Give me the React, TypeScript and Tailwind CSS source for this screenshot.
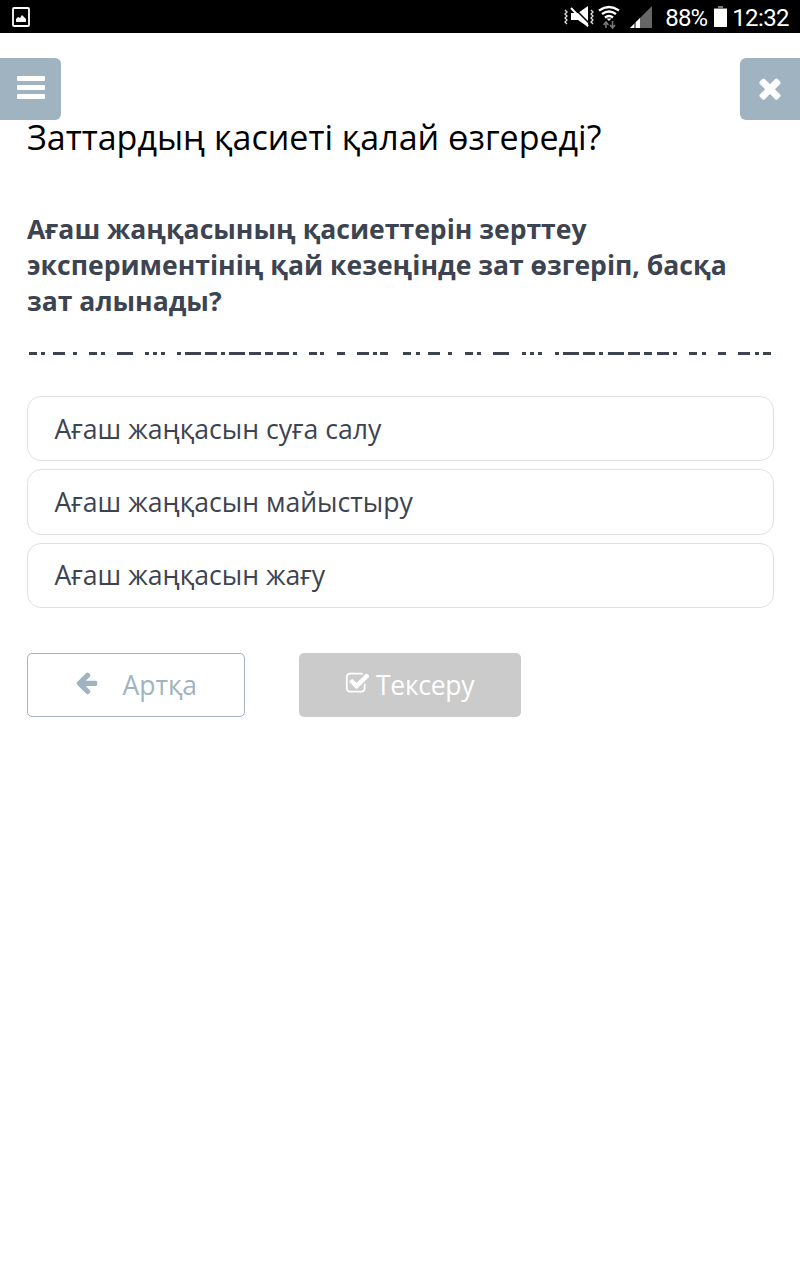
import React from 'react';

interface IconProps {
  path: string;
  className?: string;
}

const Icon = ({ path, className }: IconProps) => (
  <svg viewBox="0 0 1792 1792" fill="currentColor" className={className}>
    <path d={path} />
  </svg>
);

const icons = {
  close:
    'M1490 1322q0 40-28 68l-136 136q-28 28-68 28t-68-28l-294-294-294 294q-28 28-68 28t-68-28l-136-136q-28-28-28-68t28-68l294-294-294-294q-28-28-28-68t28-68l136-136q28-28 68-28t68 28l294 294 294-294q28-28 68-28t68 28l136 136q28 28 28 68t-28 68l-294 294 294 294q28 28 28 68z',
  back:
    'M1664 896v128q0 53-32.5 90.5t-84.5 37.5h-704l293 294q38 36 38 90t-38 90l-75 76q-37 37-90 37-52 0-91-37l-651-652q-37-37-37-90 0-52 37-91l651-650q38-38 91-38 52 0 90 38l75 74q38 38 38 91t-38 91l-293 293h704q52 0 84.5 37.5t32.5 90.5z',
  check:
    'M1472 930v318q0 119-84.5 203.5t-203.5 84.5h-832q-119 0-203.5-84.5t-84.5-203.5v-832q0-119 84.5-203.5t203.5-84.5h832q63 0 117 25 15 7 18 23 3 17-9 29l-49 49q-10 10-23 10-3 0-9-2-23-6-45-6h-832q-66 0-113 47t-47 113v832q0 66 47 113t113 47h832q66 0 113-47t47-113v-254q0-13 9-22l64-64q10-10 23-10 6 0 12 3 20 8 20 29zm231-489l-814 814q-24 24-57 24t-57-24l-430-430q-24-24-24-57t24-57l110-110q24-24 57-24t57 24l263 263 647-647q24-24 57-24t57 24l110 110q24 24 24 57t-24 57z',
};

const answers = [
  'Ағаш жаңқасын суға салу',
  'Ағаш жаңқасын майыстыру',
  'Ағаш жаңқасын жағу',
];

// [start, length] of every dash in the divider
const dashes = [
  [2, 8], [14, 4], [26, 12], [46, 4], [62, 8], [74, 4], [90, 16], [118, 4], [126, 4], [134, 4],
  [150, 4], [158, 16], [178, 12], [194, 4], [202, 16], [222, 12], [238, 8], [250, 12], [266, 4],
  [282, 8], [293, 4], [310, 8], [330, 12], [346, 4], [353, 8],
  [376, 8], [389, 4], [401, 12], [421, 4], [438, 8], [450, 4], [466, 16], [495, 4], [503, 4], [511, 4],
  [528, 4], [536, 16], [556, 12], [572, 4], [581, 16], [601, 12], [617, 8], [630, 12], [646, 4],
  [662, 8], [675, 4], [691, 8], [711, 12], [728, 4], [736, 8],
];

const StatusBar = () => (
  <div className="flex h-[33px] items-center justify-between bg-black pl-3 pr-[11px] font-['Roboto',sans-serif] text-white">
    <svg viewBox="0 0 18 20" className="h-5 w-[18px]" fill="none">
      <rect x="1" y="1" width="16" height="18" rx="1" stroke="white" strokeWidth="1.8" />
      <path d="M4 15v-3l2-2 2 1 2-3 2 2 2 2v3z" fill="white" />
    </svg>
    <div className="flex h-full items-center">
      <svg viewBox="0 0 90 30" className="mr-3 h-[30px] w-[90px]" fill="none">
        {/* Vibrate and mute */}
        <path d="M2 8l2 2-2 2 2 2-2 2 2 2-2 2 2 2M28 8l2 2-2 2 2 2-2 2 2 2-2 2 2 2" stroke="#ddd" strokeWidth="1.3" />
        <path d="M8 11h7l10-7v21l-10-7H8z" fill="white" />
        <path d="M10 5l17 17" stroke="black" strokeWidth="1.6" />
        <path d="M8 6l17 18" stroke="white" strokeWidth="2" />
        {/* Wifi */}
        <g stroke="white" strokeWidth="2.3">
          <path d="M36 8.5Q46 1.5 56 8.5" />
          <path d="M39 12Q46 7 53 12" />
          <path d="M42 15.5Q46 12.5 50 15.5" />
        </g>
        <path d="M46 19l-2.5-2.5h5z" fill="white" />
        <path d="M43 26v-6m-2.5 3l2.5-3 2.5 3M49.5 19v7m-2.5-3l2.5 3 2.5-3" stroke="#777" strokeWidth="1.6" />
        {/* Signal strength */}
        <path d="M67 26L89 4v22z" fill="#666" />
        <path d="M67 26L77 16v10z" fill="white" />
        <path d="M72 19v7" stroke="black" strokeWidth="1" />
      </svg>
      <span className="w-[49px] whitespace-nowrap pt-0.5 text-[24px] leading-none tracking-[-0.8px]">88%</span>
      <svg viewBox="0 0 13 21" className="h-[21px] w-[13px]">
        <path d="M4 0h5v2h4v2H0V2h4z" fill="#777" />
        <path d="M0 3h13v18H0z" fill="white" />
      </svg>
      <span className="ml-[5px] pt-0.5 text-[24px] leading-none tracking-[-0.6px]">12:32</span>
    </div>
  </div>
);

export default function App() {
  return (
    <div className="min-h-screen bg-white font-['Open_Sans','Noto_Sans',sans-serif] text-[#3d4451]">
      <StatusBar />

      <header className="mt-[25px] flex justify-between text-white">
        <button aria-label="menu" className="flex h-[62px] w-[61px] flex-col items-center justify-center gap-1 rounded-r-md bg-[#9fb4c0] pb-[3px]">
          <span className="h-[5px] w-7 rounded-[1px] bg-white" />
          <span className="h-[5px] w-7 rounded-[1px] bg-white" />
          <span className="h-[5px] w-7 rounded-[1px] bg-white" />
        </button>
        <button aria-label="close" className="flex h-[62px] w-[60px] items-center justify-center rounded-l-md bg-[#9fb4c0] pb-[3px]">
          <Icon path={icons.close} className="h-8 w-8" />
        </button>
      </header>

      <main className="px-[27px]">
        <h1 className="-mt-2 whitespace-nowrap text-[34px] leading-[50px] text-black">
          Заттардың қасиеті қалай өзгереді?
        </h1>
        <p className="mt-[49px] whitespace-nowrap text-[26.56px] font-bold leading-9">
          Ағаш жаңқасының қасиеттерін зерттеу
          <br />
          экспериментінің қай кезеңінде зат өзгеріп, басқа
          <br />
          зат алынады?
        </p>

        <svg viewBox="0 0 746 4" className="mt-[33px] block h-1 w-[746px]" fill="#3d4451">
          {dashes.map(([x, width]) => (
            <rect key={x} x={x} y="0" width={width} height="3" />
          ))}
        </svg>

        <div className="mt-10 flex flex-col gap-2">
          {answers.map((answer) => (
            <button
              key={answer}
              className="h-[65.3px] w-[747px] rounded-[14px] border border-[#dfe0e2] pl-[26.5px] pt-0.5 text-left text-[26.6px]"
            >
              {answer}
            </button>
          ))}
        </div>

        <div className="mt-[45px] flex gap-[54px] text-[26.5px]">
          <button className="flex h-16 w-[218px] items-center rounded-[5px] border border-[#9fb4c0] pl-[46px] pt-0.5 text-[#9fb4c0]">
            <Icon path={icons.back} className="mb-1.5 mr-[23.5px] h-[25px] w-[25px]" />
            Артқа
          </button>
          <button className="flex h-16 w-[222px] items-center rounded-[5px] bg-[#cbcbcb] pl-[46px] pt-0.5 tracking-[-0.3px] text-white">
            <Icon path={icons.check} className="mb-[5px] mr-[6px] h-[25px] w-[25px]" />
            Тексеру
          </button>
        </div>
      </main>
    </div>
  );
}
